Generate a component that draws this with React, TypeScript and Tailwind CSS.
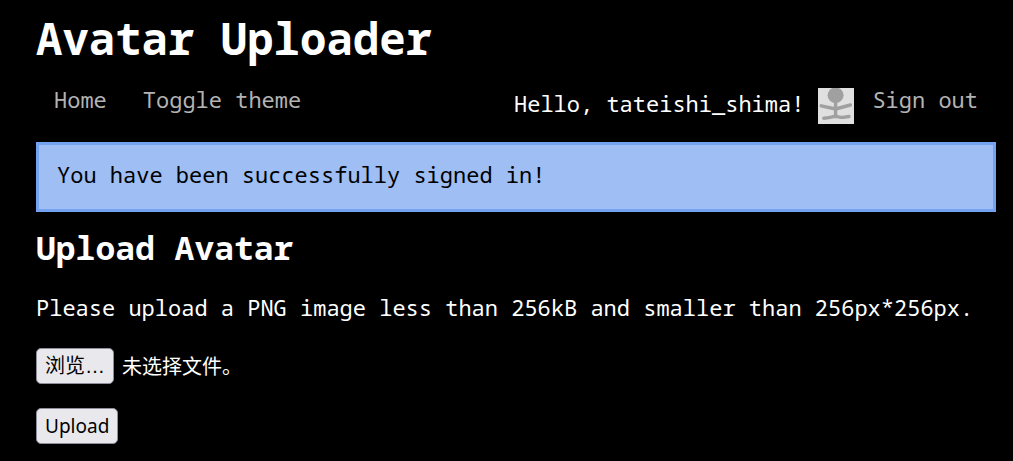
import { useRef, useState } from 'react';

const buttonClass = 'h-9 rounded-[5px] border border-[#8f8f9d] bg-[#e9e9ed] px-2 leading-8 text-black';

function Avatar() {
  return (
    <svg className="size-9 shrink-0" viewBox="0 0 36 36" role="img" aria-label="Avatar">
      <rect width="36" height="36" fill="#e0e0e0" />
      <g fill="none" stroke="#a0a0a0" strokeWidth="3.4" strokeLinecap="round" strokeLinejoin="round">
        <path d="M17.6 13V28.500" />
        <path d="M3.200 17.800L17.6 21L32.400 17" />
        <path d="M5.800 30.200C10 30 14 28.800 17.6 28.300C20 28.600 23 29.600 25 29.400L31 28.500" />
      </g>
      <ellipse cx="17.600" cy="7.200" rx="8" ry="7.800" fill="#a0a0a0" />
    </svg>
  );
}

export default function App() {
  const fileInput = useRef<HTMLInputElement>(null);
  const [fileName, setFileName] = useState('未选择文件。');
  const [dark, setDark] = useState(true);

  return (
    <div
      className={`min-h-screen pt-3 pr-[17px] pb-4 pl-9 font-['Noto_Sans_Mono','DejaVu_Sans_Mono',monospace] text-[22px] leading-[22px] ${
        dark ? 'bg-black text-white' : 'bg-white text-black'
      }`}
    >
      <header>
        <h1 className="text-[44px] leading-[52px] font-bold">Avatar Uploader</h1>
        <nav className="mt-6 flex items-start justify-between">
          <div className="flex text-[#b3b3b3]">
            <a href="#home" className="px-[18px]">
              Home
            </a>
            <button type="button" className="px-[18px]" onClick={() => setDark(!dark)}>
              Toggle theme
            </button>
          </div>
          <div className="flex items-start">
            <div className="flex items-start gap-[14px]">
              <span className="pt-1">Hello, tateishi_shima!</span>
              <Avatar />
            </div>
            <a href="#sign-out" className="px-[18px] text-[#b3b3b3]">
              Sign out
            </a>
          </div>
        </nav>
      </header>

      <main>
        <p
          role="status"
          className="mt-[18px] border-[3px] border-[#73a2f0] bg-[#9fbef4] px-[18px] pt-[18px] pb-6 text-black"
        >
          You have been successfully signed in!
        </p>

        <h2 className="mt-4 text-[33px] leading-10 font-bold">Upload Avatar</h2>
        <p className="mt-7">Please upload a PNG image less than 256kB and smaller than 256px*256px.</p>

        <form className="mt-[30px] flex flex-col items-start gap-6" onSubmit={(e) => e.preventDefault()}>
          <div className="flex items-center gap-2">
            <button
              type="button"
              lang="zh-CN"
              className={`${buttonClass} font-['Liberation_Sans','Noto_Sans_CJK_SC',sans-serif] text-[20px]`}
              onClick={() => fileInput.current?.click()}
            >
              浏览…
            </button>
            <label
              htmlFor="avatar-file"
              lang="zh-CN"
              className="font-['Noto_Sans_CJK_SC',sans-serif] text-[20px] leading-8"
            >
              {fileName}
            </label>
            <input
              ref={fileInput}
              id="avatar-file"
              type="file"
              accept="image/png"
              className="hidden"
              onChange={(e) => setFileName(e.target.files?.[0]?.name ?? '未选择文件。')}
            />
          </div>
          <button type="submit" className={`${buttonClass} font-['Noto_Sans',sans-serif] text-[19px]`}>
            Upload
          </button>
        </form>
      </main>
    </div>
  );
}
